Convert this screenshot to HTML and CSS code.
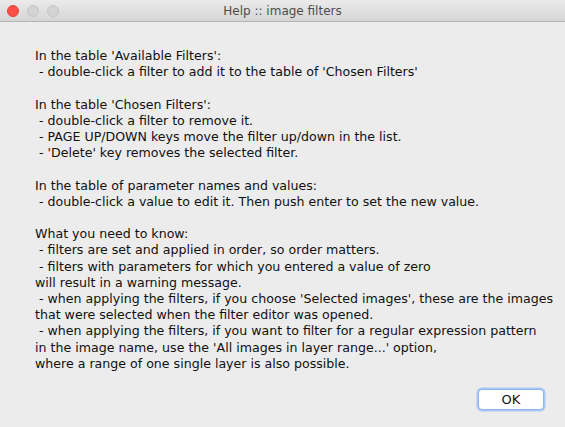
FILE: index.html
```html
<!DOCTYPE html>
<html lang="en">
<head>
<meta charset="UTF-8">
<title>Help :: image filters</title>
<link rel="stylesheet" href="styles.css">
</head>
<body>

<div class="window">
    <div class="titlebar">
        <div class="lights">
            <span class="light close"></span>
            <span class="light"></span>
            <span class="light"></span>
        </div>
        <div class="title">Help :: image filters</div>
    </div>

    <div class="content">
<p class="help">In the table 'Available Filters':
 - double-click a filter to add it to the table of 'Chosen Filters'

In the table 'Chosen Filters':
 - double-click a filter to remove it.
 - PAGE UP/DOWN keys move the filter up/down in the list.
 - 'Delete' key removes the selected filter.

In the table of parameter names and values:
 - double-click a value to edit it. Then push enter to set the new value.

What you need to know:
 - filters are set and applied in order, so order matters.
 - filters with parameters for which you entered a value of zero
will result in a warning message.
 - when applying the filters, if you choose 'Selected images', these are the images
that were selected when the filter editor was opened.
 - when applying the filters, if you want to filter for a regular expression pattern
in the image name, use the 'All images in layer range...' option,
where a range of one single layer is also possible.</p>
    </div>

    <div class="actions">
        <button class="ok">OK</button>
    </div>
</div>

</body>
</html>
```

FILE: styles.css
```css
body {
    margin: 0;
    padding: 0;
    background-color: #ececec;
    font-family: "DejaVu Sans", sans-serif;
}

.window {
    width: 565px;
    height: 427px;
    display: flex;
    flex-direction: column;
    background-color: #ececec;
}

.titlebar {
    height: 22px;
    display: flex;
    align-items: center;
    position: relative;
    background: linear-gradient(#ebebeb, #d5d5d5);
    border-bottom: 1px solid #b4b4b4;
    box-sizing: border-box;
}

.lights {
    display: flex;
    gap: 8px;
    padding-left: 7px;
}

.light {
    width: 12px;
    height: 12px;
    box-sizing: border-box;
    border-radius: 50%;
    background-color: #d3d3d3;
    border: 1px solid #c6c6c6;
}

.light.close {
    background-color: #fc4f4a;
    border-color: #e5403b;
}

.title {
    position: absolute;
    left: 0;
    right: 0;
    text-align: center;
    font-size: 12px;
    color: #4d4d4d;
}

.content {
    flex: 1;
    padding: 26px 0 0 35px;
}

.help {
    margin: 0;
    white-space: pre;
    font-size: 12.6px;
    line-height: 16.2px;
    color: #111;
}

.actions {
    display: flex;
    justify-content: flex-end;
    padding: 0 21px 17px 0;
}

.ok {
    width: 66px;
    height: 21px;
    background-color: #ffffff;
    border: 1px solid #8eb6ee;
    box-shadow: 0 0 0 1.5px #a9c8f5;
    border-radius: 4px;
    font-family: "DejaVu Sans", sans-serif;
    font-size: 13px;
    color: #111;
    padding: 0;
}
```
